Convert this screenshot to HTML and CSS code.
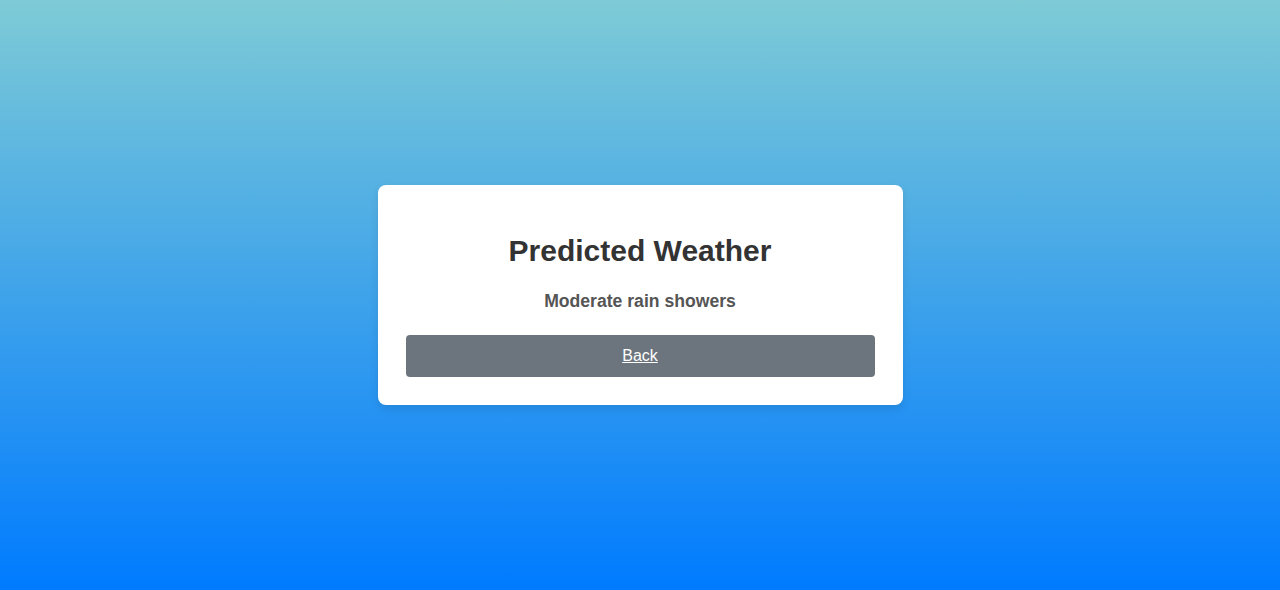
FILE: index.html
```html
<!DOCTYPE html>
<html>
<head>
<meta charset="utf-8">
<link rel="stylesheet" href="styles.css">
</head>
<body>
<main class="page">
  <div class="card">
    <h1 class="title">Predicted Weather</h1>
    <p class="result">Moderate rain showers</p>
    <a class="back" href="#">Back</a>
  </div>
</main>
</body>
</html>
```
FILE: styles.css
```css
html, body {
  margin: 0;
  padding: 0;
  height: 100%;
}
body {
  font-family: "Liberation Sans", Arial, sans-serif;
  background: linear-gradient(to bottom, #7ecbd6, #007bff);
}
.page {
  height: 590px;
  display: flex;
  align-items: center;
  justify-content: center;
}
.card {
  box-sizing: border-box;
  width: 525px;
  padding: 28px;
  background: #fff;
  border-radius: 8px;
  box-shadow: 0 4px 10px rgba(0, 0, 0, 0.1);
  text-align: center;
}
.title {
  margin: 21px 0 0;
  font-size: 30px;
  line-height: 34px;
  color: #333;
  font-weight: bold;
}
.result {
  margin: 23px 0 24px;
  font-size: 17.6px;
  line-height: 20px;
  font-weight: bold;
  color: #555;
}
.back {
  display: block;
  height: 42px;
  line-height: 42px;
  background: #6c757d;
  color: #fff;
  border-radius: 4px;
  font-size: 16px;
  text-decoration: underline;
}
```
